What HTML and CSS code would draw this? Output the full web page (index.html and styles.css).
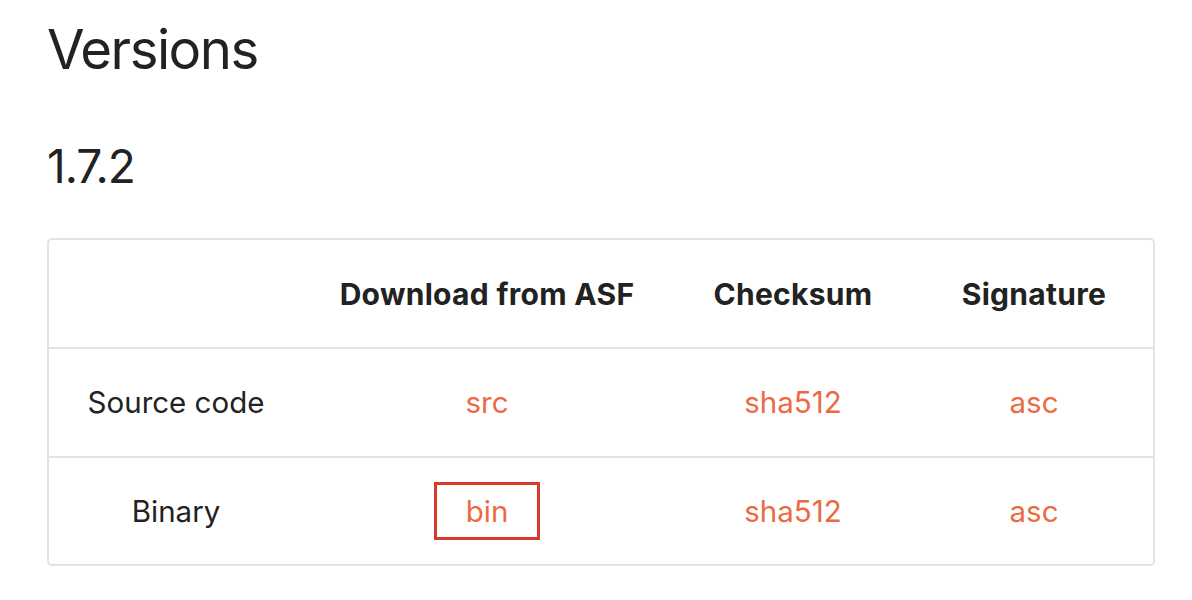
FILE: index.html
```html
<!DOCTYPE html>
<html>
<head>
<meta charset="utf-8">
<link rel="stylesheet" href="styles.css">
</head>
<body>
<main class="page">
  <h1 class="title">Versions</h1>
  <h2 class="version">1.7.2</h2>
  <div class="table-wrap">
    <table class="dl">
      <colgroup>
        <col class="c1"><col class="c2"><col class="c3"><col class="c4">
      </colgroup>
      <thead>
        <tr><th></th><th>Download from ASF</th><th>Checksum</th><th>Signature</th></tr>
      </thead>
      <tbody>
        <tr><td>Source code</td><td><a href="#">src</a></td><td><a href="#">sha512</a></td><td><a href="#">asc</a></td></tr>
        <tr><td>Binary</td><td><a href="#" class="boxed">bin</a></td><td><a href="#">sha512</a></td><td><a href="#">asc</a></td></tr>
      </tbody>
    </table>
  </div>
</main>
</body>
</html>
```
FILE: styles.css
```css
html, body { margin: 0; padding: 0; background: #fff; }
body { font-family: Inter, "Helvetica Neue", Arial, sans-serif; color: #222; }
.page { padding: 0 37px 0 47px; }
.title { margin: 0; padding-top: 14px; font-size: 54.5px; font-weight: 400; line-height: 70px; letter-spacing: -1.5px; }
.version { margin: 0; padding-top: 52px; font-size: 46px; font-weight: 400; line-height: 60px; letter-spacing: -1px; }
.table-wrap { margin-top: 42px; border: 2px solid #e3e3e3; border-radius: 5px; width: 1104px; overflow: hidden; }
.dl { width: 100%; border-collapse: collapse; font-size: 29.5px; }
.c1 { width: 254px; } .c2 { width: 368px; } .c3 { width: 244px; } .c4 { width: 238px; }
.dl th, .dl td { text-align: center; padding: 0; }
.dl th { height: 107px; font-weight: 700; color: #222; font-size: 30px; letter-spacing: 0.3px; }
.dl td { height: 106.5px; border-top: 2px solid #e3e3e3; }
.dl a { color: #ec6a42; text-decoration: none; }
.boxed { display: inline-block; border: 3px solid #d9382b; padding: 9px 29px; line-height: 34px; }
```
